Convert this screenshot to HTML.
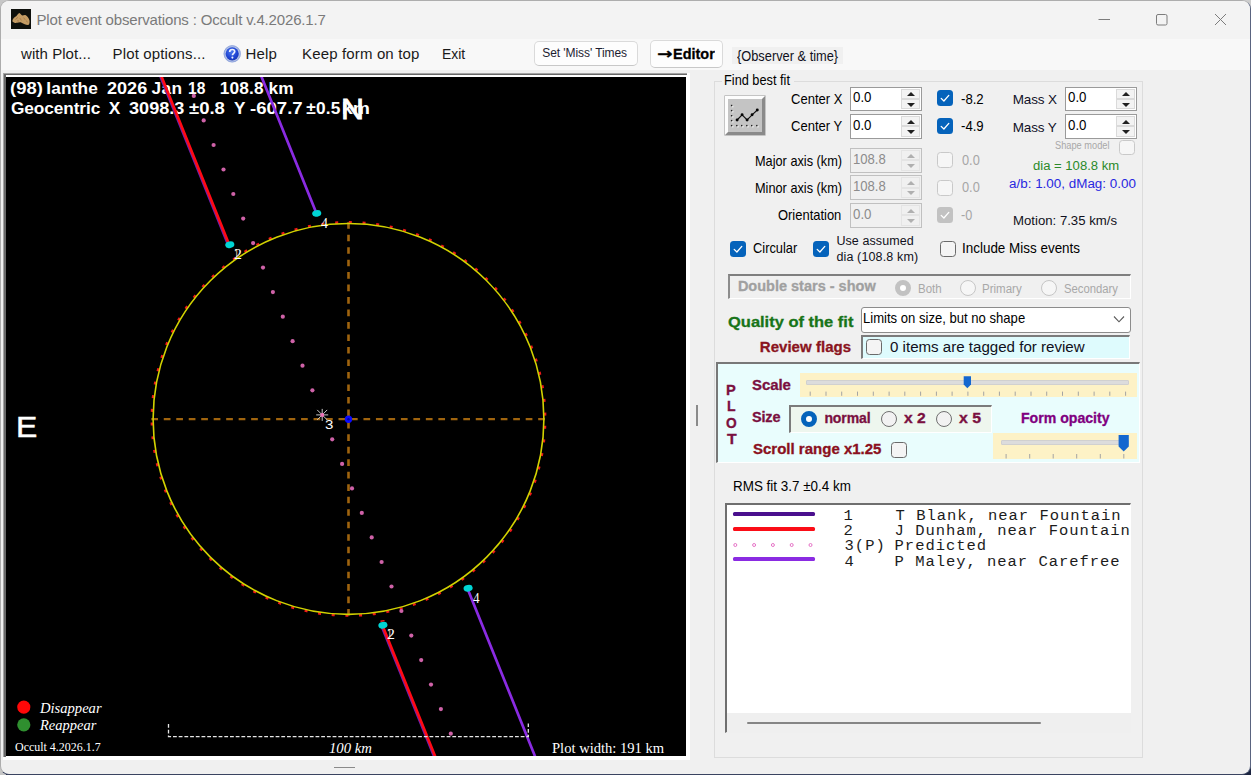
<!DOCTYPE html>
<html lang="en"><head><meta charset="utf-8"><title>Plot event observations : Occult v.4.2026.1.7</title>
<style>
*{box-sizing:border-box;margin:0;padding:0}
html,body{width:1251px;height:775px;overflow:hidden;background:#1b2440}
body{position:relative;font-family:"Liberation Sans",sans-serif}
.a{position:absolute}
.t{position:absolute;white-space:pre;transform-origin:0 0}
#topstrip{left:0;top:0;width:1251px;height:24px;background:#cdcdcd}
#leftstrip{left:0;top:0;width:6px;height:775px;background:#c6c6c6}
#win{left:0;top:0;width:1251px;height:775px;background:#f0f0f0;border:1px solid #adadad;border-radius:9px;overflow:hidden;border-right-color:#5a6480;border-bottom-color:#3a4460}
#titlebar{left:0;top:0;width:1250px;height:38px;background:#f3f3f3}
#menubar{left:0;top:38px;width:1250px;height:31px;background:#f8f8f8}
.btn{background:#fdfdfd;border:1px solid #dadada;border-bottom-color:#c8c8c8;border-radius:5px}
/* plot frame */
#pframe{left:3px;top:72.5px;width:687px;height:687.5px;background:#fff}
#pframe b{position:absolute;display:block}
#plot{left:6px;top:77px;width:680px;height:679px;background:#000;overflow:hidden}
#plot .t{margin-left:-6px;margin-top:-77px}
/* numeric updown */
.nud{background:#fff;border:1px solid #9a9a9a}
.nud.dis{background:#f0f0f0;border:1px solid #c0c0c0}
.spin{position:absolute;right:1px;top:1px;bottom:1px;width:19px;background:#f0f0f0}
.spin i{position:absolute;left:0;right:0;height:50%;border:1px solid #dadada;background:#f3f3f3}
.spin i:first-child{top:0}.spin i:last-child{bottom:0}
.spin i:after{content:"";position:absolute;left:4.8px;border-left:4.1px solid transparent;border-right:4.1px solid transparent}
.spin i:first-child:after{top:2.6px;border-bottom:4.4px solid #202020}
.spin i:last-child:after{top:2.8px;border-top:4.4px solid #202020}
.dis .spin i:first-child:after{border-bottom-color:#b0b0b0}
.dis .spin i:last-child:after{border-top-color:#b0b0b0}
.dis .spin i{border-color:#e4e4e4;background:#f0f0f0}
/* checkboxes */
.cb{width:16px;height:16px;border-radius:3.5px}
.cb.on{background:#0563bb}
.cb.off{background:#f4f4f4;border:1px solid #6a6a6a}
.cb.doff{background:#f6f6f6;border:1px solid #c9c9c9}
.cb.don{background:#c2c2c2}
.cb svg{position:absolute;left:0;top:0}
.rd{width:16px;height:16px;border-radius:50%}
.rd.off{background:#f2f2f2;border:1px solid #707070}
.rd.doff{background:#f6f6f6;border:1px solid #c6c6c6}
.rd.on{background:#fff;border:5.2px solid #0563bb}
.rd.don{background:#fff;border:5px solid #c2c2c2}
.sunk{border-top:2px solid #7b7b7b;border-left:2px solid #7b7b7b;border-right:1px solid #fff;border-bottom:1px solid #fff}
</style></head>
<body>
<div class="a" id="topstrip"></div>
<div class="a" id="leftstrip"></div>
<div class="a" id="win">
 <div class="a" id="titlebar"></div>
 <div class="a" id="menubar"></div>
</div>
<!-- title icon -->
<svg class="a" style="left:11px;top:9px" width="20" height="20" viewBox="0 0 20 20"><rect width="20" height="20" fill="#0e100c"/><path d="M1.4 11.8C1.8 9.6 3.4 8.2 5.2 7.2C6.4 6.2 7.2 4.4 8.4 4C9.4 4.4 10.2 6 11.3 6.6C12.4 6.4 13.4 5.6 14.4 6C16.4 7 17.8 9.2 18.5 11.6C18.7 13.2 18.6 14.8 17.9 15.8C16.6 16.2 15 15.8 13.7 15.2C12.2 14.6 11 13.6 9.6 13.2C8.4 13 7.4 13.6 6.2 13.8C5 14 4.2 14 3.4 13.7C2.2 13.4 1.4 12.8 1.4 11.8Z" fill="#c49c64"/><path d="M4.5 10.5L7 8.2M8.8 9L10.4 11.4M12.6 8.6L14.2 10.8M15.4 11.6L16.4 13.4M6 11.8L8 12" stroke="#a67a48" stroke-width="0.9" fill="none"/></svg>
<!-- window controls -->
<svg class="a" style="left:1090px;top:8px" width="150" height="24" viewBox="0 0 150 24" fill="none" stroke="#7c7c7c" stroke-width="1"><path d="M8.5 11.5H20"/><rect x="66.5" y="6.5" width="10.5" height="10.5" rx="1.5"/><path d="M125 6L136 17M136 6L125 17"/></svg>
<!-- menu buttons -->
<div class="a btn" style="left:534px;top:41px;width:104px;height:25px"></div>
<div class="a btn" style="left:650px;top:40px;width:73px;height:28px"></div>
<div class="a" style="left:732px;top:47px;width:111px;height:17px;background:#f0f0f0"></div>
<!-- help icon -->
<svg class="a" style="left:222px;top:44px" width="21" height="21" viewBox="0 0 21 21"><defs><radialGradient id="hg" cx="0.42" cy="0.35" r="0.75"><stop offset="0" stop-color="#4a78ee"/><stop offset="0.65" stop-color="#1c40d0"/><stop offset="1" stop-color="#1a36a8"/></radialGradient></defs><circle cx="10.2" cy="9.8" r="8.6" fill="#b4c2e6"/><circle cx="10.2" cy="9.8" r="8.1" fill="none" stroke="#8fa4dc" stroke-width="0.9"/><circle cx="10.2" cy="9.8" r="6.6" fill="url(#hg)"/><path d="M7.7 7.9C7.7 6.2 8.9 5.5 10.2 5.5C11.7 5.5 12.7 6.4 12.7 7.6C12.7 9.3 10.5 9.5 10.4 11.3" stroke="#eef2ff" stroke-width="1.7" fill="none"/><circle cx="10.4" cy="13.6" r="1.05" fill="#eef2ff"/></svg>

<!-- plot frame -->
<div class="a" id="pframe"><b style="left:0;top:0;width:684px;height:1.3px;background:#a4a4a4"></b><b style="left:0;top:1.3px;width:684px;height:1.4px;background:#686868"></b><b style="left:0;top:0;width:1.3px;height:684.5px;background:#a4a4a4"></b><b style="left:1.3px;top:1.3px;width:1.3px;height:683px;background:#686868"></b></div>
<div class="a" id="plot">
<span class="t" style='left:10.40px;top:76.50px;font:normal 700 17.3px/22px "Liberation Sans", sans-serif;color:#fff;transform:scaleX(1.0675);'>(98)</span>
<span class="t" style='left:46.20px;top:76.50px;font:normal 700 17.3px/22px "Liberation Sans", sans-serif;color:#fff;letter-spacing:0.164px;'>Ianthe</span>
<span class="t" style='left:107.40px;top:76.50px;font:normal 700 17.3px/22px "Liberation Sans", sans-serif;color:#fff;transform:scaleX(1.0467);'>2026</span>
<span class="t" style='left:151.40px;top:76.50px;font:normal 700 17.3px/22px "Liberation Sans", sans-serif;color:#fff;letter-spacing:0.439px;'>Jan</span>
<span class="t" style='left:187.90px;top:76.50px;font:normal 700 17.3px/22px "Liberation Sans", sans-serif;color:#fff;transform:scaleX(0.9027);'>18</span>
<span class="t" style='left:219.80px;top:76.50px;font:normal 700 17.3px/22px "Liberation Sans", sans-serif;color:#fff;letter-spacing:0.141px;'>108.8</span>
<span class="t" style='left:268.50px;top:76.50px;font:normal 700 17.3px/22px "Liberation Sans", sans-serif;color:#fff;letter-spacing:0.089px;'>km</span>
<span class="t" style='left:10.90px;top:96.70px;font:normal 700 17.3px/22px "Liberation Sans", sans-serif;color:#fff;letter-spacing:-0.096px;'>Geocentric</span>
<span class="t" style='left:108.70px;top:96.70px;font:normal 700 17.3px/22px "Liberation Sans", sans-serif;color:#fff;'>X</span>
<span class="t" style='left:129.20px;top:96.70px;font:normal 700 17.3px/22px "Liberation Sans", sans-serif;color:#fff;transform:scaleX(1.0470);'>3098.3</span>
<span class="t" style='left:189.30px;top:96.70px;font:normal 700 17.3px/22px "Liberation Sans", sans-serif;color:#fff;transform:scaleX(1.0709);'>±0.8</span>
<span class="t" style='left:233.60px;top:96.70px;font:normal 700 17.3px/22px "Liberation Sans", sans-serif;color:#fff;transform:scaleX(0.9917);'>Y</span>
<span class="t" style='left:250.30px;top:96.70px;font:normal 700 17.3px/22px "Liberation Sans", sans-serif;color:#fff;transform:scaleX(1.0746);'>-607.7</span>
<span class="t" style='left:306.30px;top:96.70px;font:normal 700 17.3px/22px "Liberation Sans", sans-serif;color:#fff;letter-spacing:0.168px;'>±0.5</span>
<span class="t" style='left:341.88px;top:96.70px;font:normal 700 17.3px/22px "Liberation Sans", sans-serif;color:#fff;transform:scaleX(1.1181);'>km</span>
<span class="t" style='left:15.87px;top:406.60px;font:normal 400 30px/39px "Liberation Sans", sans-serif;color:#fff;transform:scaleX(1.0647);-webkit-text-stroke:0.5px #fff;'>E</span>
<span class="t" style='left:39.57px;top:698.00px;font:italic 400 15px/20px "Liberation Serif", serif;color:#fff;transform:scaleX(0.9722);'>Disappear</span>
<span class="t" style='left:39.57px;top:715.40px;font:italic 400 15px/20px "Liberation Serif", serif;color:#fff;transform:scaleX(0.9651);'>Reappear</span>
<span class="t" style='left:14.50px;top:739.30px;font:normal 400 12.5px/16px "Liberation Serif", serif;color:#fff;transform:scaleX(0.9561);'>Occult 4.2026.1.7</span>
<span class="t" style='left:328.50px;top:739.70px;font:italic 400 14px/18px "Liberation Serif", serif;color:#fff;transform:scaleX(1.0488);'>100 km</span>
<span class="t" style='left:551.80px;top:738.00px;font:normal 400 15px/20px "Liberation Serif", serif;color:#fff;transform:scaleX(0.9718);'>Plot width: 191 km</span>
<svg class="a" style="left:0;top:0" width="680" height="679" viewBox="6 77 680 679">
<path d="M151.3 419.09999999999997H545" stroke="#a0640e" stroke-width="2.3" stroke-dasharray="6.7 5.78" fill="none"/>
<path d="M348.5 222.2V615.5" stroke="#a0640e" stroke-width="2.6" stroke-dasharray="6.6 5.88" fill="none"/>
<circle cx="348.5" cy="418.95" r="196.7" stroke="#f01818" stroke-width="2.4" stroke-dasharray="3 10.732" stroke-dashoffset="-6.87" fill="none"/>
<circle cx="348.5" cy="418.95" r="195.4" stroke="#d2d200" stroke-width="1.6" fill="none"/>
<path d="M157.78 70L227.62 243.5M381.57 626L436.31 762" stroke="#6a1fb0" stroke-width="2.6" fill="none"/>
<path d="M158.88 70L228.72 243.5M382.67 626L437.41 762" stroke="#ff0a14" stroke-width="2.7" fill="none"/>
<path d="M258.78 70L316.34 213M467.68 589L537.31 762" stroke="#8a2be2" stroke-width="2.7" fill="none"/>
<ellipse cx="229.8" cy="244.7" rx="4.6" ry="3.3" fill="#00d4d4" transform="rotate(-12 229.8 244.7)"/>
<ellipse cx="316.7" cy="213.4" rx="4.6" ry="3.3" fill="#00d4d4" transform="rotate(-12 316.7 213.4)"/>
<ellipse cx="382.9" cy="625.3" rx="4.6" ry="3.3" fill="#00d4d4" transform="rotate(-12 382.9 625.3)"/>
<ellipse cx="468.1" cy="588.3" rx="4.6" ry="3.3" fill="#00d4d4" transform="rotate(-12 468.1 588.3)"/>
<path d="M380.5 621.3L384.5 620.6" stroke="#ff2020" stroke-width="1.4"/>
<circle cx="193.8" cy="95.9" r="2.1" fill="#cf62a8"/>
<circle cx="203.7" cy="120.4" r="2.1" fill="#cf62a8"/>
<circle cx="213.6" cy="145.0" r="2.1" fill="#cf62a8"/>
<circle cx="223.5" cy="169.5" r="2.1" fill="#cf62a8"/>
<circle cx="233.3" cy="194.0" r="2.1" fill="#cf62a8"/>
<circle cx="243.2" cy="218.6" r="2.1" fill="#cf62a8"/>
<circle cx="253.1" cy="243.1" r="2.1" fill="#cf62a8"/>
<circle cx="263.0" cy="267.6" r="2.1" fill="#cf62a8"/>
<circle cx="272.9" cy="292.1" r="2.1" fill="#cf62a8"/>
<circle cx="282.8" cy="316.7" r="2.1" fill="#cf62a8"/>
<circle cx="292.6" cy="341.2" r="2.1" fill="#cf62a8"/>
<circle cx="302.5" cy="365.7" r="2.1" fill="#cf62a8"/>
<circle cx="312.4" cy="390.3" r="2.1" fill="#cf62a8"/>
<circle cx="332.2" cy="439.3" r="2.1" fill="#cf62a8"/>
<circle cx="342.1" cy="463.9" r="2.1" fill="#cf62a8"/>
<circle cx="352.0" cy="488.4" r="2.1" fill="#cf62a8"/>
<circle cx="361.8" cy="512.9" r="2.1" fill="#cf62a8"/>
<circle cx="371.7" cy="537.4" r="2.1" fill="#cf62a8"/>
<circle cx="381.6" cy="562.0" r="2.1" fill="#cf62a8"/>
<circle cx="391.5" cy="586.5" r="2.1" fill="#cf62a8"/>
<circle cx="401.4" cy="611.0" r="2.1" fill="#cf62a8"/>
<circle cx="411.3" cy="635.6" r="2.1" fill="#cf62a8"/>
<circle cx="421.2" cy="660.1" r="2.1" fill="#cf62a8"/>
<circle cx="431.0" cy="684.6" r="2.1" fill="#cf62a8"/>
<circle cx="440.9" cy="709.1" r="2.1" fill="#cf62a8"/>
<circle cx="450.8" cy="733.7" r="2.1" fill="#cf62a8"/>
<path d="M316.2 414.9H328.2M322.2 408.9V420.9M317.2 409.9L327.2 419.9M317.2 419.9L327.2 409.9" stroke="#c8c8c8" stroke-width="1" fill="none"/>
<circle cx="322.2" cy="414.9" r="2" fill="#f070b8"/>
<circle cx="348.5" cy="419.2" r="3.7" fill="#0a0aff"/><circle cx="348.5" cy="419.2" r="1.3" fill="#0000a8"/>
<circle cx="23.8" cy="707.1" r="6.6" fill="#ff0808"/><circle cx="23.8" cy="724.8" r="6.6" fill="#2f8f2f"/>
<path d="M168.5 724V736.6H528.3V723.5" stroke="#e6e6e6" stroke-width="1.3" stroke-dasharray="3.8 1.9" fill="none"/>
</svg>
<span class="t" style='left:341.08px;top:89.00px;font:normal 400 30px/39px "Liberation Sans", sans-serif;color:#fff;transform:scaleX(1.0611);-webkit-text-stroke:0.9px #fff;'>N</span>
<span class="t" style='left:233.83px;top:244.00px;font:normal 400 15px/20px "Liberation Serif", serif;color:#e8c8a0;transform:scaleX(0.6667);'>1</span>
<span class="t" style='left:233.60px;top:244.00px;font:normal 400 15px/20px "Liberation Serif", serif;color:#fff;transform:scaleX(1.0571);'>2</span>
<span class="t" style='left:320.70px;top:212.50px;font:normal 400 15.5px/20px "Liberation Serif", serif;color:#fff;transform:scaleX(0.9000);'>4</span>
<span class="t" style='left:325.20px;top:415.70px;font:normal 400 13px/17px "Liberation Sans", sans-serif;color:#fff;transform:scaleX(1.1571);'>3</span>
<span class="t" style='left:386.83px;top:624.40px;font:normal 400 15px/20px "Liberation Serif", serif;color:#e8c8a0;transform:scaleX(0.6667);'>1</span>
<span class="t" style='left:386.60px;top:624.40px;font:normal 400 15px/20px "Liberation Serif", serif;color:#fff;transform:scaleX(1.0571);'>2</span>
<span class="t" style='left:472.50px;top:587.70px;font:normal 400 15.5px/20px "Liberation Serif", serif;color:#fff;transform:scaleX(0.8500);'>4</span>
</div>
<!-- scroll bars of plot -->
<div class="a" style="left:696px;top:405px;width:1.5px;height:21px;background:#8a8a8a"></div>
<div class="a" style="left:334px;top:766.5px;width:21px;height:1.5px;background:#8a8a8a"></div>

<div class="a" style="left:714px;top:81px;width:429px;height:677px;border:1px solid #dcdcdc"></div>
<div class="a" style="left:722px;top:74px;width:72px;height:14px;background:#f0f0f0"></div>
<div class="a" style="left:725px;top:95.5px;width:39.5px;height:39px;background:#c4c4c4;border-top:3px solid #fdfdfd;border-left:3px solid #fdfdfd;border-right:3px solid #8a8a8a;border-bottom:3px solid #8a8a8a;box-shadow:0 0 0 0.6px #a8a8a8"></div>
<svg class="a" style="left:0;top:0" width="1251" height="775" viewBox="0 0 1251 775"><rect x="731.9" y="105.8" width="1.5" height="1.5" fill="#f0f0f0"/><rect x="730.9" y="104.8" width="1.4" height="1.4" fill="#222"/><rect x="731.9" y="110.9" width="1.5" height="1.5" fill="#f0f0f0"/><rect x="730.9" y="109.9" width="1.4" height="1.4" fill="#222"/><rect x="731.9" y="116.0" width="1.5" height="1.5" fill="#f0f0f0"/><rect x="730.9" y="115.0" width="1.4" height="1.4" fill="#222"/><rect x="731.9" y="120.9" width="1.5" height="1.5" fill="#f0f0f0"/><rect x="730.9" y="119.9" width="1.4" height="1.4" fill="#222"/><rect x="731.9" y="125.9" width="1.5" height="1.5" fill="#f0f0f0"/><rect x="730.9" y="124.9" width="1.4" height="1.4" fill="#222"/><rect x="737.1" y="125.9" width="1.5" height="1.5" fill="#f0f0f0"/><rect x="736.1" y="124.9" width="1.4" height="1.4" fill="#222"/><rect x="742.0" y="125.9" width="1.5" height="1.5" fill="#f0f0f0"/><rect x="741.0" y="124.9" width="1.4" height="1.4" fill="#222"/><rect x="747.1" y="125.9" width="1.5" height="1.5" fill="#f0f0f0"/><rect x="746.1" y="124.9" width="1.4" height="1.4" fill="#222"/><rect x="752.0" y="125.9" width="1.5" height="1.5" fill="#f0f0f0"/><rect x="751.0" y="124.9" width="1.4" height="1.4" fill="#222"/><rect x="757.1" y="125.9" width="1.5" height="1.5" fill="#f0f0f0"/><rect x="756.1" y="124.9" width="1.4" height="1.4" fill="#222"/><path d="M737.1 120L742.1 114.8L747.1 120L752.1 114.8L757.3 110" stroke="#111" stroke-width="1.1" fill="none"/><circle cx="737.1" cy="120" r="1.45" fill="#050505"/><circle cx="742.1" cy="114.8" r="1.45" fill="#050505"/><circle cx="747.1" cy="120" r="1.45" fill="#050505"/><circle cx="752.1" cy="114.8" r="1.45" fill="#050505"/><circle cx="757.3" cy="110" r="1.45" fill="#050505"/></svg>
<div class="a nud" style="left:850px;top:86.7px;width:72px;height:24.5px"><div class="spin"><i></i><i></i></div></div>
<div class="a nud" style="left:850px;top:114.2px;width:72px;height:24.5px"><div class="spin"><i></i><i></i></div></div>
<div class="a nud dis" style="left:850px;top:148px;width:72px;height:24.5px"><div class="spin"><i></i><i></i></div></div>
<div class="a nud dis" style="left:850px;top:175.3px;width:72px;height:24.5px"><div class="spin"><i></i><i></i></div></div>
<div class="a nud dis" style="left:850px;top:203px;width:72px;height:24.5px"><div class="spin"><i></i><i></i></div></div>
<div class="a nud" style="left:1065px;top:86.7px;width:72px;height:24.5px"><div class="spin"><i></i><i></i></div></div>
<div class="a nud" style="left:1065px;top:114.2px;width:72px;height:24.5px"><div class="spin"><i></i><i></i></div></div>
<div class="a cb on" style="left:937px;top:90.3px"><svg width="16" height="16" viewBox="0 0 16 16"><path d="M4.2 8.4L6.9 11L11.8 5.4" stroke="#fff" stroke-width="1.3" fill="none" stroke-linecap="round" stroke-linejoin="round"/></svg></div>
<div class="a cb on" style="left:937px;top:117.7px"><svg width="16" height="16" viewBox="0 0 16 16"><path d="M4.2 8.4L6.9 11L11.8 5.4" stroke="#fff" stroke-width="1.3" fill="none" stroke-linecap="round" stroke-linejoin="round"/></svg></div>
<div class="a cb doff" style="left:937px;top:152px"></div>
<div class="a cb doff" style="left:937px;top:179.5px"></div>
<div class="a cb don" style="left:937px;top:207px"><svg width="16" height="16" viewBox="0 0 16 16"><path d="M4.2 8.4L6.9 11L11.8 5.4" stroke="#fff" stroke-width="1.3" fill="none" stroke-linecap="round" stroke-linejoin="round"/></svg></div>
<div class="a cb doff" style="left:1119px;top:140px;width:15.5px;height:15px"></div>
<div class="a cb on" style="left:730px;top:240.5px"><svg width="16" height="16" viewBox="0 0 16 16"><path d="M4.2 8.4L6.9 11L11.8 5.4" stroke="#fff" stroke-width="1.3" fill="none" stroke-linecap="round" stroke-linejoin="round"/></svg></div>
<div class="a cb on" style="left:812.5px;top:240.5px"><svg width="16" height="16" viewBox="0 0 16 16"><path d="M4.2 8.4L6.9 11L11.8 5.4" stroke="#fff" stroke-width="1.3" fill="none" stroke-linecap="round" stroke-linejoin="round"/></svg></div>
<div class="a cb off" style="left:940px;top:240.5px"></div>
<div class="a sunk" style="left:727.5px;top:273.5px;width:403px;height:25.5px;border-top-color:#7f7f7f;border-left-color:#8c8c8c"></div>
<div class="a rd don" style="left:895px;top:279.5px"></div>
<div class="a rd doff" style="left:960px;top:279.5px"></div>
<div class="a rd doff" style="left:1041px;top:279.5px"></div>
<div class="a" style="left:860.5px;top:307px;width:270px;height:25.5px;background:#fff;border:1px solid #8c8c8c;border-radius:3px"></div>
<svg class="a" style="left:1112px;top:315px" width="14" height="9" viewBox="0 0 14 9"><path d="M2 1.5L7 6.8L12 1.5" stroke="#5a5a5a" stroke-width="1.1" fill="none"/></svg>
<div class="a sunk" style="left:860.5px;top:335px;width:269.5px;height:24px;background:#defbfd"></div>
<div class="a cb off" style="left:866px;top:339.2px"></div>
<div class="a" style="left:716px;top:361.7px;width:424px;height:101.8px;background:#e9fdfd;border-top:2.5px solid #787878;border-left:2.6px solid #787878;border-right:1px solid #fff;border-bottom:1px solid #fff"></div>
<div class="a" style="left:800px;top:373px;width:336.5px;height:23.5px;background:#fdf2c6"></div>
<div class="a" style="left:806px;top:379.5px;width:323px;height:5px;background:#dcdcdc;border:1px solid #d0d0d0;border-radius:1px"></div>
<div class="a" style="left:993px;top:432.7px;width:143.5px;height:26px;background:#fdf2c6"></div>
<div class="a" style="left:1001px;top:440.3px;width:128px;height:5px;background:#dcdcdc;border:1px solid #d0d0d0;border-radius:1px"></div>
<svg class="a" style="left:0;top:0;pointer-events:none" width="1251" height="775" viewBox="0 0 1251 775"><rect x="809.7" y="391.6" width="1" height="4.2" fill="#a4a4a4"/><rect x="825.5" y="391.6" width="1" height="4.2" fill="#a4a4a4"/><rect x="841.2" y="391.6" width="1" height="4.2" fill="#a4a4a4"/><rect x="857.0" y="391.6" width="1" height="4.2" fill="#a4a4a4"/><rect x="872.8" y="391.6" width="1" height="4.2" fill="#a4a4a4"/><rect x="888.6" y="391.6" width="1" height="4.2" fill="#a4a4a4"/><rect x="904.3" y="391.6" width="1" height="4.2" fill="#a4a4a4"/><rect x="920.1" y="391.6" width="1" height="4.2" fill="#a4a4a4"/><rect x="935.9" y="391.6" width="1" height="4.2" fill="#a4a4a4"/><rect x="951.6" y="391.6" width="1" height="4.2" fill="#a4a4a4"/><rect x="967.4" y="391.6" width="1" height="4.2" fill="#a4a4a4"/><rect x="983.2" y="391.6" width="1" height="4.2" fill="#a4a4a4"/><rect x="998.9" y="391.6" width="1" height="4.2" fill="#a4a4a4"/><rect x="1014.7" y="391.6" width="1" height="4.2" fill="#a4a4a4"/><rect x="1030.5" y="391.6" width="1" height="4.2" fill="#a4a4a4"/><rect x="1046.2" y="391.6" width="1" height="4.2" fill="#a4a4a4"/><rect x="1062.0" y="391.6" width="1" height="4.2" fill="#a4a4a4"/><rect x="1077.8" y="391.6" width="1" height="4.2" fill="#a4a4a4"/><rect x="1093.6" y="391.6" width="1" height="4.2" fill="#a4a4a4"/><rect x="1109.3" y="391.6" width="1" height="4.2" fill="#a4a4a4"/><rect x="1125.1" y="391.6" width="1" height="4.2" fill="#a4a4a4"/><rect x="1005.6" y="454" width="1" height="4.5" fill="#a4a4a4"/><rect x="1029.2" y="454" width="1" height="4.5" fill="#a4a4a4"/><rect x="1052.7" y="454" width="1" height="4.5" fill="#a4a4a4"/><rect x="1076.2" y="454" width="1" height="4.5" fill="#a4a4a4"/><rect x="1099.8" y="454" width="1" height="4.5" fill="#a4a4a4"/><rect x="1123.3" y="454" width="1" height="4.5" fill="#a4a4a4"/><path d="M963.7 376.2H971V384.5L967.35 388.3L963.7 384.5Z" fill="#1467cf"/><path d="M1118.6 435H1128.8V446.5L1123.7 451.4L1118.6 446.5Z" fill="#1467cf"/></svg>
<div class="a sunk" style="left:789px;top:405px;width:203px;height:27.5px;background:#eef6ee"></div>
<div class="a rd on" style="left:801px;top:410.6px"></div>
<div class="a rd off" style="left:881px;top:410.6px"></div>
<div class="a rd off" style="left:936px;top:410.6px"></div>
<div class="a cb off" style="left:891.2px;top:442px"></div>
<div class="a" style="left:724.5px;top:503.3px;width:406.5px;height:230px;background:#fff;border-top:2px solid #6f6f6f;border-left:2px solid #6f6f6f;border-right:1px solid #fff;border-bottom:1px solid #fff"></div>
<div class="a" style="left:726.5px;top:712.5px;width:404px;height:20px;background:#efefef"></div>
<div class="a" style="left:747px;top:721.7px;width:294px;height:2.2px;background:#858585;border-radius:1px"></div>
<div class="a" style="left:732.5px;top:512.1px;width:82px;height:3.6px;background:#4a0f8e;border-radius:1.5px"></div>
<div class="a" style="left:732.5px;top:526.8px;width:82px;height:3.8px;background:#fb0d17;border-radius:1.5px"></div>
<div class="a" style="left:732.5px;top:557.1px;width:82px;height:3.8px;background:#8a2be2;border-radius:1.5px"></div>
<svg class="a" style="left:0;top:0" width="1251" height="775" viewBox="0 0 1251 775"><circle cx="735.3" cy="545" r="1.5" fill="none" stroke="#e264c0" stroke-width="0.9"/><circle cx="754.1" cy="545" r="1.5" fill="none" stroke="#e264c0" stroke-width="0.9"/><circle cx="772.9" cy="545" r="1.5" fill="none" stroke="#e264c0" stroke-width="0.9"/><circle cx="791.7" cy="545" r="1.5" fill="none" stroke="#e264c0" stroke-width="0.9"/><circle cx="810.5" cy="545" r="1.5" fill="none" stroke="#e264c0" stroke-width="0.9"/></svg>
<span class="t" style='left:36.50px;top:9.50px;font:normal 400 15px/20px "Liberation Sans", sans-serif;color:#7a7a7a;letter-spacing:-0.164px;'>Plot event observations : Occult v.4.2026.1.7</span>
<span class="t" style='left:21.00px;top:43.50px;font:normal 400 15px/20px "Liberation Sans", sans-serif;color:#1a1a1a;letter-spacing:0.061px;'>with Plot...</span>
<span class="t" style='left:112.60px;top:43.50px;font:normal 400 15px/20px "Liberation Sans", sans-serif;color:#1a1a1a;letter-spacing:0.142px;'>Plot options...</span>
<span class="t" style='left:245.50px;top:43.50px;font:normal 400 15px/20px "Liberation Sans", sans-serif;color:#1a1a1a;letter-spacing:0.198px;'>Help</span>
<span class="t" style='left:302.00px;top:43.50px;font:normal 400 15px/20px "Liberation Sans", sans-serif;color:#1a1a1a;letter-spacing:0.151px;'>Keep form on top</span>
<span class="t" style='left:442.07px;top:43.50px;font:normal 400 15px/20px "Liberation Sans", sans-serif;color:#1a1a1a;transform:scaleX(0.9260);'>Exit</span>
<span class="t" style='left:542.30px;top:45.30px;font:normal 400 12px/16px "Liberation Sans", sans-serif;color:#1c1c30;letter-spacing:-0.076px;'>Set &#x27;Miss&#x27; Times</span>
<span class="t" style='left:657.20px;top:44.30px;font:normal 700 15px/20px "DejaVu Sans","Liberation Sans",sans-serif;color:#000;transform:scaleX(1.2333);-webkit-text-stroke:0.3px #000;'>→</span>
<span class="t" style='left:672.57px;top:44.00px;font:normal 700 15.5px/20px "Liberation Sans", sans-serif;color:#000;transform:scaleX(0.9327);-webkit-text-stroke:0.3px #000;'>Editor</span>
<span class="t" style='left:736.60px;top:46.50px;font:normal 400 14px/18px "Liberation Sans", sans-serif;color:#101020;transform:scaleX(0.9151);'>{Observer &amp; time}</span>
<span class="t" style='left:724.35px;top:70.30px;font:normal 400 15px/20px "Liberation Sans", sans-serif;color:#000;transform:scaleX(0.8505);'>Find best fit</span>
<span class="t" style='left:790.60px;top:88.80px;font:normal 400 15px/20px "Liberation Sans", sans-serif;color:#000;transform:scaleX(0.8684);'>Center X</span>
<span class="t" style='left:790.60px;top:116.40px;font:normal 400 15px/20px "Liberation Sans", sans-serif;color:#000;transform:scaleX(0.8684);'>Center Y</span>
<span class="t" style='left:754.95px;top:150.70px;font:normal 400 15px/20px "Liberation Sans", sans-serif;color:#000;transform:scaleX(0.8492);'>Major axis (km)</span>
<span class="t" style='left:754.95px;top:178.10px;font:normal 400 15px/20px "Liberation Sans", sans-serif;color:#000;transform:scaleX(0.8492);'>Minor axis (km)</span>
<span class="t" style='left:778.00px;top:204.50px;font:normal 400 15px/20px "Liberation Sans", sans-serif;color:#000;transform:scaleX(0.8626);'>Orientation</span>
<span class="t" style='left:852.70px;top:87.20px;font:normal 400 15.3px/20px "Liberation Sans", sans-serif;color:#000;transform:scaleX(0.8672);'>0.0</span>
<span class="t" style='left:852.70px;top:114.70px;font:normal 400 15.3px/20px "Liberation Sans", sans-serif;color:#000;transform:scaleX(0.8672);'>0.0</span>
<span class="t" style='left:852.64px;top:148.80px;font:normal 400 15.3px/20px "Liberation Sans", sans-serif;color:#8c8c8c;transform:scaleX(0.8566);'>108.8</span>
<span class="t" style='left:852.64px;top:176.20px;font:normal 400 15.3px/20px "Liberation Sans", sans-serif;color:#8c8c8c;transform:scaleX(0.8566);'>108.8</span>
<span class="t" style='left:852.70px;top:203.50px;font:normal 400 15.3px/20px "Liberation Sans", sans-serif;color:#8c8c8c;transform:scaleX(0.8672);'>0.0</span>
<span class="t" style='left:961.00px;top:88.80px;font:normal 400 15px/20px "Liberation Sans", sans-serif;color:#000;transform:scaleX(0.8783);'>-8.2</span>
<span class="t" style='left:961.00px;top:116.30px;font:normal 400 15px/20px "Liberation Sans", sans-serif;color:#000;transform:scaleX(0.8783);'>-4.9</span>
<span class="t" style='left:962.00px;top:149.50px;font:normal 400 15px/20px "Liberation Sans", sans-serif;color:#a6a6a6;transform:scaleX(0.8533);'>0.0</span>
<span class="t" style='left:962.00px;top:176.90px;font:normal 400 15px/20px "Liberation Sans", sans-serif;color:#a6a6a6;transform:scaleX(0.8533);'>0.0</span>
<span class="t" style='left:961.00px;top:204.50px;font:normal 400 15px/20px "Liberation Sans", sans-serif;color:#a6a6a6;transform:scaleX(0.8465);'>-0</span>
<span class="t" style='left:1012.80px;top:91.00px;font:normal 400 13.5px/18px "Liberation Sans", sans-serif;color:#101028;letter-spacing:-0.181px;'>Mass X</span>
<span class="t" style='left:1012.80px;top:118.50px;font:normal 400 13.5px/18px "Liberation Sans", sans-serif;color:#101028;letter-spacing:-0.181px;'>Mass Y</span>
<span class="t" style='left:1067.70px;top:87.20px;font:normal 400 15.3px/20px "Liberation Sans", sans-serif;color:#000;transform:scaleX(0.8672);'>0.0</span>
<span class="t" style='left:1067.70px;top:114.70px;font:normal 400 15.3px/20px "Liberation Sans", sans-serif;color:#000;transform:scaleX(0.8672);'>0.0</span>
<span class="t" style='left:1055.00px;top:138.50px;font:normal 400 10px/13px "Liberation Sans", sans-serif;color:#a8a8a8;transform:scaleX(0.9249);'>Shape model</span>
<span class="t" style='left:1032.60px;top:157.90px;font:normal 400 12.5px/16px "Liberation Sans", sans-serif;color:#2a8a2a;transform:scaleX(1.0460);'>dia = 108.8 km</span>
<span class="t" style='left:1009.00px;top:175.50px;font:normal 400 12.5px/16px "Liberation Sans", sans-serif;color:#2828e0;transform:scaleX(1.0746);'>a/b: 1.00, dMag: 0.00</span>
<span class="t" style='left:1013.25px;top:212.80px;font:normal 400 12.5px/16px "Liberation Sans", sans-serif;color:#101020;transform:scaleX(1.0544);'>Motion: 7.35 km/s</span>
<span class="t" style='left:752.50px;top:238.00px;font:normal 400 15px/20px "Liberation Sans", sans-serif;color:#000;transform:scaleX(0.8572);'>Circular</span>
<span class="t" style='left:836.40px;top:232.70px;font:normal 400 12.5px/16px "Liberation Sans", sans-serif;color:#101020;letter-spacing:0.083px;'>Use assumed</span>
<span class="t" style='left:836.40px;top:249.00px;font:normal 400 12.5px/16px "Liberation Sans", sans-serif;color:#101020;letter-spacing:0.144px;'>dia (108.8 km)</span>
<span class="t" style='left:962.40px;top:238.00px;font:normal 400 15px/20px "Liberation Sans", sans-serif;color:#000;transform:scaleX(0.8961);'>Include Miss events</span>
<span class="t" style='left:737.90px;top:276.50px;font:normal 700 14.5px/19px "Liberation Sans", sans-serif;color:#a0a0a0;-webkit-text-stroke:0.3px #a0a0a0;'>Double stars - show</span>
<span class="t" style='left:918.00px;top:280.70px;font:normal 400 12px/16px "Liberation Sans", sans-serif;color:#a8a8a8;transform:scaleX(0.9579);'>Both</span>
<span class="t" style='left:982.00px;top:280.70px;font:normal 400 12px/16px "Liberation Sans", sans-serif;color:#a8a8a8;transform:scaleX(0.9605);'>Primary</span>
<span class="t" style='left:1064.00px;top:280.70px;font:normal 400 12px/16px "Liberation Sans", sans-serif;color:#a8a8a8;transform:scaleX(0.9413);'>Secondary</span>
<span class="t" style='left:727.80px;top:312.00px;font:normal 700 15.3px/20px "Liberation Sans", sans-serif;color:#187418;transform:scaleX(1.0771);-webkit-text-stroke:0.3px #187418;'>Quality of the fit</span>
<span class="t" style='left:863.13px;top:308.20px;font:normal 400 15px/20px "Liberation Sans", sans-serif;color:#000;transform:scaleX(0.8722);'>Limits on size, but no shape</span>
<span class="t" style='left:759.80px;top:336.90px;font:normal 700 15px/20px "Liberation Sans", sans-serif;color:#8a1420;letter-spacing:0.034px;-webkit-text-stroke:0.3px #8a1420;'>Review flags</span>
<span class="t" style='left:890.00px;top:337.10px;font:normal 400 15.5px/20px "Liberation Sans", sans-serif;color:#101020;transform:scaleX(0.9737);'>0 items are tagged for review</span>
<span class="t" style='left:726.02px;top:379.50px;font:normal 700 15px/20px "Liberation Sans", sans-serif;color:#7a1040;transform:scaleX(0.9778);-webkit-text-stroke:0.3px #7a1040;'>P</span>
<span class="t" style='left:726.56px;top:396.10px;font:normal 700 15px/20px "Liberation Sans", sans-serif;color:#7a1040;transform:scaleX(0.9375);-webkit-text-stroke:0.3px #7a1040;'>L</span>
<span class="t" style='left:726.00px;top:412.50px;font:normal 700 15px/20px "Liberation Sans", sans-serif;color:#7a1040;transform:scaleX(0.9167);-webkit-text-stroke:0.3px #7a1040;'>O</span>
<span class="t" style='left:726.50px;top:428.50px;font:normal 700 15px/20px "Liberation Sans", sans-serif;color:#7a1040;transform:scaleX(1.0556);-webkit-text-stroke:0.3px #7a1040;'>T</span>
<span class="t" style='left:752.00px;top:374.70px;font:normal 700 15px/20px "Liberation Sans", sans-serif;color:#7a1040;letter-spacing:-0.064px;-webkit-text-stroke:0.3px #7a1040;'>Scale</span>
<span class="t" style='left:752.00px;top:408.00px;font:normal 700 14.5px/19px "Liberation Sans", sans-serif;color:#7a1040;letter-spacing:-0.183px;-webkit-text-stroke:0.3px #7a1040;'>Size</span>
<span class="t" style='left:824.40px;top:409.40px;font:normal 700 14px/18px "Liberation Sans", sans-serif;color:#7a1040;letter-spacing:-0.077px;-webkit-text-stroke:0.3px #7a1040;'>normal</span>
<span class="t" style='left:904.00px;top:409.40px;font:normal 700 14px/18px "Liberation Sans", sans-serif;color:#7a1040;transform:scaleX(1.1181);-webkit-text-stroke:0.3px #7a1040;'>x 2</span>
<span class="t" style='left:959.30px;top:409.40px;font:normal 700 14px/18px "Liberation Sans", sans-serif;color:#7a1040;transform:scaleX(1.1334);-webkit-text-stroke:0.3px #7a1040;'>x 5</span>
<span class="t" style='left:1020.80px;top:408.90px;font:normal 700 14.5px/19px "Liberation Sans", sans-serif;color:#800080;transform:scaleX(0.9728);-webkit-text-stroke:0.3px #800080;'>Form opacity</span>
<span class="t" style='left:752.80px;top:440.00px;font:normal 700 14.5px/19px "Liberation Sans", sans-serif;color:#8a1020;transform:scaleX(1.0350);-webkit-text-stroke:0.3px #8a1020;'>Scroll range x1.25</span>
<span class="t" style='left:732.60px;top:475.90px;font:normal 400 15px/20px "Liberation Sans", sans-serif;color:#000;transform:scaleX(0.8954);'>RMS fit 3.7 ±0.4 km</span>
<span class="t" style='left:843.60px;top:506.20px;font:normal 400 15.5px/20px "Liberation Mono", monospace;color:#1c1c1c;letter-spacing:0.97px;'>1</span>
<span class="t" style='left:895.60px;top:506.20px;font:normal 400 15.5px/20px "Liberation Mono", monospace;color:#1c1c1c;letter-spacing:0.97px;'>T Blank, near Fountain</span>
<span class="t" style='left:843.60px;top:521.30px;font:normal 400 15.5px/20px "Liberation Mono", monospace;color:#1c1c1c;letter-spacing:0.97px;'>2</span>
<span class="t" style='left:894.60px;top:521.30px;font:normal 400 15.5px/20px "Liberation Mono", monospace;color:#1c1c1c;letter-spacing:0.97px;'>J Dunham, near Fountain</span>
<span class="t" style='left:844.60px;top:536.40px;font:normal 400 15.5px/20px "Liberation Mono", monospace;color:#1c1c1c;letter-spacing:0.97px;'>3(P)</span>
<span class="t" style='left:894.60px;top:536.40px;font:normal 400 15.5px/20px "Liberation Mono", monospace;color:#1c1c1c;letter-spacing:0.97px;'>Predicted</span>
<span class="t" style='left:844.60px;top:551.50px;font:normal 400 15.5px/20px "Liberation Mono", monospace;color:#1c1c1c;letter-spacing:0.97px;'>4</span>
<span class="t" style='left:894.60px;top:551.50px;font:normal 400 15.5px/20px "Liberation Mono", monospace;color:#1c1c1c;letter-spacing:0.97px;'>P Maley, near Carefree</span>
</body></html>
